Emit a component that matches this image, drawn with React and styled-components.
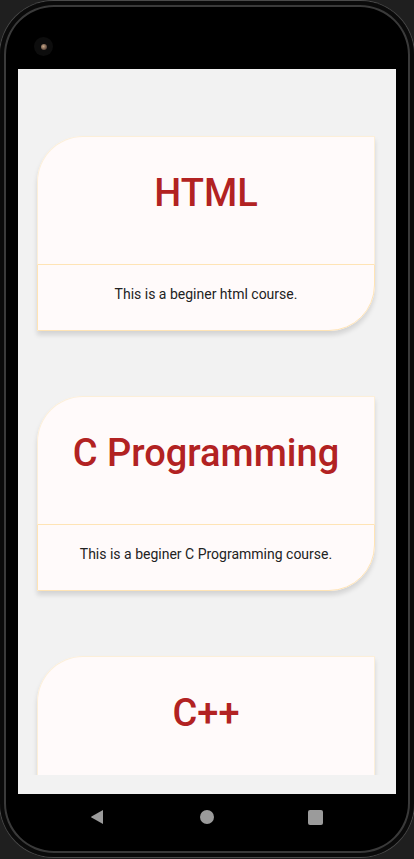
import React from 'react';
import styled, { createGlobalStyle } from 'styled-components';

const GlobalStyle = createGlobalStyle`
  html, body {
    margin: 0;
    padding: 0;
    background: #1f1f1f;
    font-family: Roboto, "Noto Sans", sans-serif;
  }
  * { box-sizing: border-box; }
`;

const Page = styled.div`
  width: 414px;
  height: 859px;
  padding-top: 1px;
  overflow: hidden;
`;

const Phone = styled.div`
  width: 414px;
  height: 856px;
  background: #000;
  border-radius: 54px;
  box-shadow: 0 0 0 1px #4a4a4a, inset 0 0 0 4px #0a0a0a, inset 0 0 0 6px #3a3a3a;
  display: flex;
  flex-direction: column;
  padding: 0 18px;
`;

const TopBezel = styled.div`
  height: 68px;
  display: flex;
  align-items: flex-end;
  padding: 0 0 13px 16px;
`;

const Camera = styled.div`
  width: 19px;
  height: 19px;
  border-radius: 50%;
  background: #0d0d0d;
  display: flex;
  align-items: center;
  justify-content: center;
`;

const Lens = styled.div`
  width: 6px;
  height: 6px;
  border-radius: 50%;
  background: radial-gradient(circle at 40% 40%, #c9a98a 0%, #6b5446 60%, #2a2220 100%);
`;

const Screen = styled.div`
  height: 725px;
  background: #f2f2f2;
  display: flex;
  flex-direction: column;
`;

const List = styled.div`
  height: 706px;
  overflow: hidden;
  padding: 67px 21px 0 19px;
  display: flex;
  flex-direction: column;
  gap: 65px;
`;

const Card = styled.div`
  flex-shrink: 0;
  background: #fffafa;
  border-top-left-radius: 46px;
  border-bottom-right-radius: 46px;
  box-shadow: 0 4px 5px rgba(0, 0, 0, 0.13);
`;

const Head = styled.div`
  height: 128px;
  border: 1px solid #fcefd9;
  border-bottom: none;
  border-top-left-radius: 46px;
  padding-top: 34px;
  text-align: center;
`;

const Title = styled.div`
  font-size: 38px;
  font-weight: 500;
  line-height: 45px;
  color: #b22222;
`;

const Body = styled.div`
  height: 67px;
  border: 1px solid #ffe4b5;
  border-bottom-right-radius: 46px;
  display: flex;
  justify-content: center;
  padding-top: 19px;
`;

const Desc = styled.div`
  font-size: 14px;
  line-height: 20px;
  color: #222;
`;

const NavBar = styled.div`
  height: 46px;
  display: flex;
  align-items: center;
  padding-left: 72px;
`;

const NavIcon = styled.svg`
  display: block;
  flex-shrink: 0;
  fill: #9b9b9b;
  margin-left: ${(p) => p.$gap || 0}px;
`;

const courses = [
  { title: 'HTML', desc: 'This is a beginer html course.' },
  { title: 'C Programming', desc: 'This is a beginer C Programming course.' },
  { title: 'C++', desc: 'This is a beginer C++ course.' },
];

export default function App() {
  return (
    <Page>
      <GlobalStyle />
      <Phone>
        <TopBezel>
          <Camera><Lens /></Camera>
        </TopBezel>
        <Screen>
          <List>
            {courses.map((c) => (
              <Card key={c.title}>
                <Head>
                  <Title>{c.title}</Title>
                </Head>
                <Body>
                  <Desc>{c.desc}</Desc>
                </Body>
              </Card>
            ))}
          </List>
        </Screen>
        <NavBar>
          <NavIcon width="14" height="16" viewBox="0 0 14 16">
            <path d="M13 1 L13 15 L1.5 8.6 Q0.6 8 1.5 7.4 Z" />
          </NavIcon>
          <NavIcon $gap={96} width="14" height="14" viewBox="0 0 14 14">
            <circle cx="7" cy="7" r="7" />
          </NavIcon>
          <NavIcon $gap={94} width="15" height="15" viewBox="0 0 15 15">
            <rect x="0" y="0" width="15" height="15" rx="2" />
          </NavIcon>
        </NavBar>
      </Phone>
    </Page>
  );
}
